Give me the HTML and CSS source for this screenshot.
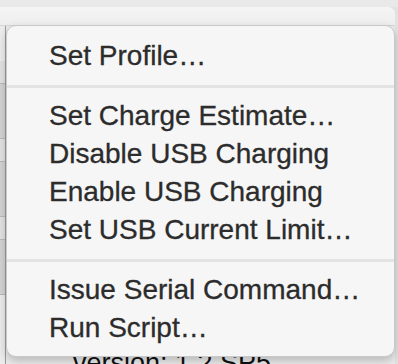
FILE: index.html
```html
<!DOCTYPE html>
<html lang="en">
<head>
    <meta charset="UTF-8">
    <meta name="viewport" content="width=device-width, initial-scale=1.0">
    <title>Device Menu</title>
    <link rel="stylesheet" href="styles.css">
</head>
<body>
    <div class="window">
        <div class="titlebar"></div>
        <div class="panel">
            <div class="header"></div>
            <div class="content">
                <div class="list">
                    <div class="row"></div>
                    <div class="row dark"></div>
                    <div class="row"></div>
                    <div class="row dark"></div>
                    <div class="row"></div>
                    <div class="row dark"></div>
                </div>
                <div class="info">
                    <div class="version">version: 1.2 SP5</div>
                </div>
            </div>
        </div>
    </div>

    <div class="menu">
        <div class="item">Set Profile…</div>
        <div class="separator"></div>
        <div class="item">Set Charge Estimate…</div>
        <div class="item">Disable USB Charging</div>
        <div class="item">Enable USB Charging</div>
        <div class="item">Set USB Current Limit…</div>
        <div class="separator"></div>
        <div class="item">Issue Serial Command…</div>
        <div class="item">Run Script…</div>
    </div>
</body>
</html>
```

FILE: styles.css
```css
body {
    margin: 0;
    width: 398px;
    height: 364px;
    overflow: hidden;
    position: relative;
    background-color: #e2e2e2;
    font-family: "Liberation Sans", Arial, sans-serif;
}

.titlebar {
    height: 7px;
    background-color: #e9e9e9;
}

.panel {
    margin-right: 3px;
    height: 357px;
    border-top-right-radius: 7px;
    background-color: #ececec;
    overflow: hidden;
}

.header {
    height: 18px;
    background: linear-gradient(#f5f5f5, #eeeeee);
    border-bottom: 1px solid #d6d6d6;
}

.content {
    display: flex;
}

.list {
    width: 5px;
    border-right: 1px solid #9c9c9c;
    padding-top: 35px;
}

.row {
    height: 22px;
    background-color: #e2e2e2;
    border-bottom: 1px solid #b9b9b9;
}

.row.dark {
    height: 54px;
    background-color: #d3d3d3;
}

.info {
    flex: 1;
    padding-top: 322px;
    padding-left: 67px;
}

.version {
    font-size: 27px;
    color: #111;
    line-height: 30px;
}

.menu {
    position: absolute;
    left: 6px;
    top: 25px;
    width: 387px;
    padding: 11px 0 9px;
    background-color: #f6f6f6;
    border: 1px solid #c9c9c9;
    border-radius: 10px;
    box-shadow: 0 4px 10px rgba(0, 0, 0, 0.22);
}

.item {
    height: 38px;
    line-height: 38px;
    padding-left: 42px;
    font-size: 28px;
    color: #2c2c2c;
    -webkit-text-stroke: 0.3px #2c2c2c;
    white-space: nowrap;
}

.separator {
    height: 22px;
    display: flex;
    align-items: center;
}

.separator::before {
    content: "";
    flex: 1;
    height: 3px;
    background-color: #e3e3e3;
}
```
